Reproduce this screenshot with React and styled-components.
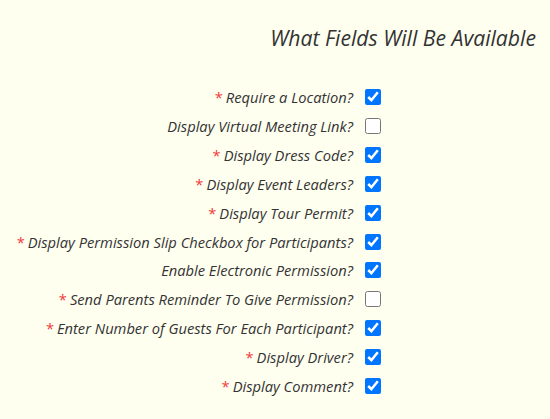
import React from "react";
import styled, { createGlobalStyle } from "styled-components";

const GlobalStyle = createGlobalStyle`
  html, body {
    margin: 0;
    background: #fffff0;
  }
  body {
    font-family: "Open Sans", "Noto Sans", sans-serif;
    color: #333;
  }
`;

const Page = styled.div`
  width: 550px;
  height: 419px;
  padding-top: 22px;
  box-sizing: border-box;
`;

const Title = styled.h2`
  margin: 0 14px 0 0;
  text-align: right;
  font-size: 21.2px;
  font-weight: 400;
  font-style: italic;
  line-height: 32px;
  color: #333;
`;

const Fields = styled.div`
  margin-top: 29px;
  display: flex;
  flex-direction: column;
`;

const Row = styled.label`
  display: flex;
  align-items: center;
  height: 28.85px;
`;

const Label = styled.span`
  width: 353px;
  text-align: right;
  font-size: 14.7px;
  font-style: italic;
  color: #333;
  white-space: nowrap;
`;

const Required = styled.span`
  color: #ef3b3b;
  font-style: normal;
  margin-right: 3px;
`;

const Check = styled.input.attrs({ type: "checkbox" })`
  width: 16px;
  height: 16px;
  margin: 0 0 0 12px;
  accent-color: #0075ff;
`;

const fields = [
  { label: "Require a Location?", required: true, checked: true },
  { label: "Display Virtual Meeting Link?", required: false, checked: false },
  { label: "Display Dress Code?", required: true, checked: true },
  { label: "Display Event Leaders?", required: true, checked: true },
  { label: "Display Tour Permit?", required: true, checked: true },
  { label: "Display Permission Slip Checkbox for Participants?", required: true, checked: true },
  { label: "Enable Electronic Permission?", required: false, checked: true },
  { label: "Send Parents Reminder To Give Permission?", required: true, checked: false },
  { label: "Enter Number of Guests For Each Participant?", required: true, checked: true },
  { label: "Display Driver?", required: true, checked: true },
  { label: "Display Comment?", required: true, checked: true },
];

export default function App() {
  return (
    <>
      <GlobalStyle />
      <Page>
        <Title>What Fields Will Be Available</Title>
        <Fields>
          {fields.map((f) => (
            <Row key={f.label}>
              <Label>
                {f.required && <Required>*</Required>}
                {f.label}
              </Label>
              <Check defaultChecked={f.checked} />
            </Row>
          ))}
        </Fields>
      </Page>
    </>
  );
}
